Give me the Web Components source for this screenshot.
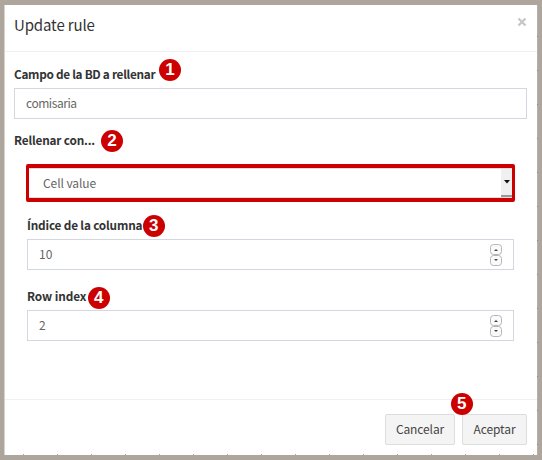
<!DOCTYPE html>
<html lang="es"><head><meta charset="utf-8"><title>Update rule</title>
<style>
html,body{margin:0;height:460px;overflow:hidden}
body{background:#aea59c;font-family:"Noto Sans CJK SC","Noto Sans",sans-serif;font-size:12px;color:#333}
</style></head><body>
<rule-dialog heading="Update rule">
  <form-field label="Campo de la BD a rellenar" style="--track:-.3px"><step-badge slot="badge" n="1" style="left:145px;top:-5px"></step-badge><text-box value="comisaria" style="letter-spacing:-.45px"></text-box></form-field>
  <form-field label="Rellenar con..." class="second"><step-badge slot="badge" n="2" style="left:87px;top:0"></step-badge><select-box value="Cell value"></select-box></form-field>
  <form-field label="Índice de la columna" class="inner third"><step-badge slot="badge" n="3" style="left:115.7px;top:0"></step-badge><text-box value="10" number></text-box></form-field>
  <form-field label="Row index" class="inner fourth" style="--track:-.08px"><step-badge slot="badge" n="4" style="left:60.8px;top:.6px"></step-badge><text-box value="2" number></text-box></form-field>
  <push-button slot="footer" style="width:70px">Cancelar</push-button>
  <push-button slot="footer" style="width:65px">Aceptar</push-button>
  <step-badge slot="footer" n="5" style="left:445.7px;top:-7.3px"></step-badge>
</rule-dialog>
<script>
function define(name, render){
  customElements.define(name, class extends HTMLElement{
    connectedCallback(){
      if(this.shadowRoot) return;
      this.attachShadow({mode:'open'}).innerHTML = render(this);
    }
  });
}
define('rule-dialog', el => `<style>
:host{display:block;box-sizing:border-box;height:460px;padding:5px 4px 5px 4px;background:#aea59c}
.panel{position:relative;box-sizing:border-box;height:450px;background:#fff;border-left:1px solid #d8d3ce;display:flex;flex-direction:column}
header{box-sizing:border-box;height:47px;border-bottom:1px solid #f0f0f0;display:flex;justify-content:space-between;padding:0 11px 0 9px;flex:none}
h1{margin:0;font-size:15px;font-weight:400;line-height:40px;letter-spacing:-.13px;color:#333}
svg{margin-top:12px;width:10px;height:10px}
main{flex:1;padding:12px 11px 0 9px}
::slotted(.second){margin-top:11px}
::slotted(.third){margin:13px 13px 0 13px}
::slotted(.fourth){margin:16px 13px 0 13px}
footer{position:relative;box-sizing:border-box;height:56px;border-top:1px solid #f0f0f0;display:flex;justify-content:flex-end;gap:7px;padding:14px 11px 0 0;flex:none}
.ticks{position:absolute;left:0;right:0;bottom:0;height:1px;background:repeating-linear-gradient(90deg,transparent 0 18px,#aaa 18px 19px,transparent 19px 34px)}
.side{position:absolute;right:0;top:0;bottom:0;width:1px;background:repeating-linear-gradient(#b8b0aa 0 31px,#8f8780 31px 32px,#b8b0aa 32px 34px)}
</style><div class="panel"><header><h1>${el.getAttribute('heading')}</h1><svg viewBox="0 0 10 10"><path d="M1.5 1.5l7 7M8.5 1.5l-7 7" stroke="#c6c6c6" stroke-width="2.3"/></svg></header>
<main><slot></slot></main><footer><slot name="footer"></slot></footer><div class="ticks"></div><div class="side"></div></div>`);
define('form-field', el => `<style>
:host{display:block}
.row{position:relative;height:24px}
label{display:block;line-height:20px;font-size:11.8px;letter-spacing:var(--track,-.18px);font-weight:700;color:#333;white-space:nowrap}
</style><div class="row"><label>${el.getAttribute('label')}</label><slot name="badge"></slot></div><slot></slot>`);
define('text-box', el => `<style>
:host{box-sizing:border-box;height:31px;border:1px solid #d5d7e0;background:#fff;display:flex;align-items:center;justify-content:space-between;padding:0 11px 0 11px;color:#666}
span{line-height:26px;padding-bottom:2px}
svg{width:12px;height:24px}
</style><span>${el.getAttribute('value')}</span>${el.hasAttribute('number')?`<svg viewBox="0 0 12 24"><g fill="#fafafa" stroke="#b5b5b5"><rect x=".5" y="1.5" width="11" height="10" rx="3"/><rect x=".5" y="12.5" width="11" height="10" rx="3"/></g><path d="M4 8l2-2 2 2zM4 16l2 2 2-2z" fill="#444"/></svg>`:''}`);
define('select-box', el => `<style>
:host{box-sizing:border-box;height:38px;margin:10px 12px 0 12px;border:solid #c00;border-width:4px 3px 4px 3px;border-radius:2px;display:flex;justify-content:space-between;align-items:center;color:#666;padding-left:14px;background:#fff;box-shadow:inset 0 1px #dcdce6,inset 0 -1px #dcdce6}
span{padding-bottom:2px;letter-spacing:-.08px}
.arrow{align-self:stretch;margin:1px 0;width:11px;background:#f0f0f0;border-bottom:2px solid #999;box-sizing:border-box;display:flex;align-items:center;justify-content:center}
svg{width:6px;height:4px}
</style><span>${el.getAttribute('value')}</span><div class="arrow"><svg viewBox="0 0 6 4"><path d="M0 0h6L3 3.5z" fill="#111"/></svg></div>`);
define('push-button', () => `<style>
:host{box-sizing:border-box;height:31px;border:1px solid #ddd;border-radius:2px;background:#f4f4f4;color:#444;text-align:center;display:block;line-height:27px;letter-spacing:-.1px}
</style><slot></slot>`);
define('step-badge', el => `<style>
:host{position:absolute;width:22px;height:22px;border-radius:50%;background:#c00;color:#fff;font:700 17px/22px "Liberation Sans",sans-serif;text-align:center}
</style>${el.getAttribute('n')}`);
</script></body></html>
